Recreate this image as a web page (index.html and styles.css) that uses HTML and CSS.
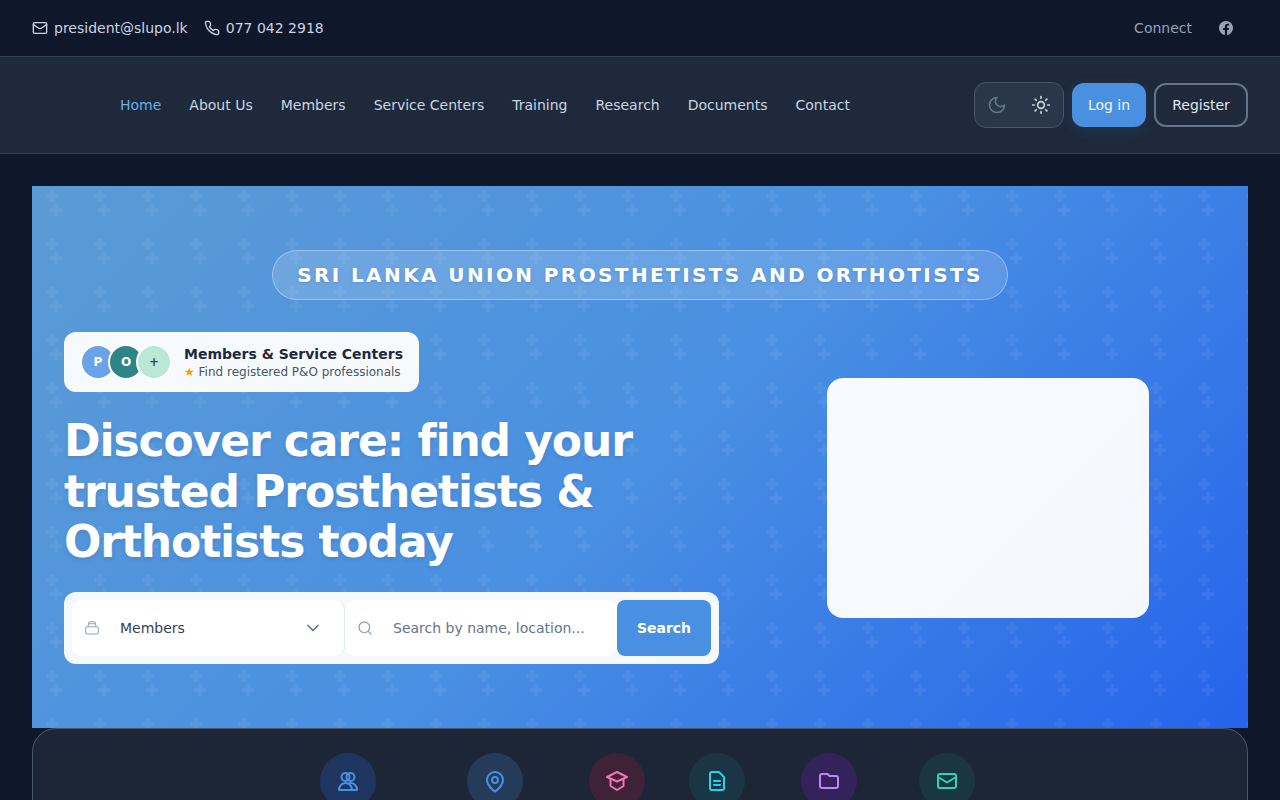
FILE: index.html
```html
<!DOCTYPE html>
<html lang="en">
<head>
<meta charset="utf-8">
<title>SLUPO</title>
<link rel="stylesheet" href="styles.css">
</head>
<body>
<div class="topbar">
  <div class="contact">
    <a class="contact-item"><svg class="i16" viewBox="0 0 24 24"><rect x="2" y="4" width="20" height="16" rx="2"/><path d="m22 7-8.97 5.7a1.94 1.94 0 0 1-2.06 0L2 7"/></svg>president@slupo.lk</a>
    <a class="contact-item"><svg class="i16" viewBox="0 0 24 24"><path d="M22 16.92v3a2 2 0 0 1-2.18 2 19.79 19.79 0 0 1-8.63-3.07 19.5 19.5 0 0 1-6-6 19.79 19.79 0 0 1-3.07-8.67A2 2 0 0 1 4.11 2h3a2 2 0 0 1 2 1.72c.13.96.36 1.9.7 2.81a2 2 0 0 1-.45 2.11L8.09 9.91a16 16 0 0 0 6 6l1.27-1.27a2 2 0 0 1 2.11-.45c.91.34 1.85.57 2.81.7A2 2 0 0 1 22 16.92z"/></svg>077 042 2918</a>
  </div>
  <div class="social">
    <span>Connect</span>
    <svg class="fb" viewBox="0 0 24 24"><path d="M24 12.07C24 5.4 18.63 0 12 0S0 5.4 0 12.07c0 6.03 4.39 11.02 10.13 11.93v-8.44H7.08v-3.49h3.05V9.41c0-3.02 1.79-4.69 4.53-4.69 1.31 0 2.69.24 2.69.24v2.96h-1.52c-1.49 0-1.96.93-1.96 1.89v2.26h3.33l-.53 3.49h-2.8V24C19.61 23.09 24 18.1 24 12.07z"/></svg>
  </div>
</div>

<nav class="navbar">
  <div class="nav-links">
    <a class="nav-link active">Home</a>
    <a class="nav-link">About Us</a>
    <a class="nav-link">Members</a>
    <a class="nav-link">Service Centers</a>
    <a class="nav-link">Training</a>
    <a class="nav-link">Research</a>
    <a class="nav-link">Documents</a>
    <a class="nav-link">Contact</a>
  </div>
  <div class="nav-actions">
    <div class="theme">
      <svg class="i20 moon" viewBox="0 0 24 24"><path d="M12 3a6 6 0 0 0 9 9 9 9 0 1 1-9-9Z"/></svg>
      <svg class="i20 sun" viewBox="0 0 24 24"><circle cx="12" cy="12" r="4"/><path d="M12 2v2M12 20v2M4.93 4.93l1.41 1.41M17.66 17.66l1.41 1.41M2 12h2M20 12h2M6.34 17.66l-1.41 1.41M19.07 4.93l-1.41 1.41"/></svg>
    </div>
    <a class="btn btn-login">Log in</a>
    <a class="btn btn-register">Register</a>
  </div>
</nav>

<main class="page">
  <section class="hero">
    <div class="pill-row"><h2 class="pill">SRI LANKA UNION PROSTHETISTS AND ORTHOTISTS</h2></div>
    <div class="hero-grid">
      <div class="hero-left">
        <div class="badge">
          <div class="avatars">
            <span class="avatar a1">P</span>
            <span class="avatar a2">O</span>
            <span class="avatar a3">+</span>
          </div>
          <div class="badge-text">
            <div class="badge-title">Members &amp; Service Centers</div>
            <div class="badge-sub"><span class="star">★</span> Find registered P&amp;O professionals</div>
          </div>
        </div>
        <h1 class="headline">Discover care: find your trusted Prosthetists &amp; Orthotists today</h1>
        <form class="search">
          <div class="field field-select">
            <svg class="i16 field-icon thin" viewBox="0 0 24 24"><rect x="2.500" y="10" width="19" height="11" rx="2.500"/><path d="M6 10l1-5.500a2 2 0 0 1 2-2h6a2 2 0 0 1 2 2l1 5.500M7 5.500h10"/></svg>
            <span class="select-value">Members</span>
            <svg class="i20 chevron" viewBox="0 0 24 24"><path d="m6 9 6 6 6-6"/></svg>
          </div>
          <div class="field field-input">
            <svg class="i16 field-icon" viewBox="0 0 24 24"><circle cx="11" cy="11" r="8"/><path d="m21 21-4.300-4.300"/></svg>
            <span class="placeholder">Search by name, location...</span>
          </div>
          <button class="search-btn" type="button">Search</button>
        </form>
      </div>
      <div class="hero-right">
        <div class="hero-card">
          <svg class="card-art" viewBox="0 0 322 240"><circle cx="45" cy="8" r="20"/><circle cx="90" cy="10" r="8"/><path d="M120 240l60-40 30 18 30-50 50-30 30-20v122z"/><circle cx="235" cy="200" r="20"/></svg>
        </div>
      </div>
    </div>
  </section>

  <section class="quick">
    <a class="quick-item w1"><span class="circle c-blue"><svg class="i24" viewBox="0 0 24 24"><circle cx="9.500" cy="8" r="4"/><circle cx="14.500" cy="8" r="4"/><path d="M3 21a6.500 7 0 0 1 13 0M13.500 14.200a6.500 6.500 0 0 1 7.500 6.800M3 21h18"/></svg></span></a>
    <a class="quick-item w2"><span class="circle c-slate"><svg class="i24" viewBox="0 0 24 24"><path d="M20 11c0 5-6 10.500-8 11.500-2-1-8-6.500-8-11.500a8 8 0 0 1 16 0z"/><circle cx="12" cy="11" r="3"/></svg></span></a>
    <a class="quick-item w3"><span class="circle c-pink"><svg class="i24" viewBox="0 0 24 24"><path d="M12 3l10 5-10 4.500L2 8z"/><path d="M5.500 10v7l6.500 4 6.500-4v-7"/></svg></span></a>
    <a class="quick-item w4"><span class="circle c-cyan"><svg class="i24" viewBox="0 0 24 24"><path d="M14 3H7a2 2 0 0 0-2 2v14a2 2 0 0 0 2 2h10a2 2 0 0 0 2-2V8z"/><path d="M9 12h6M9 16h6"/></svg></span></a>
    <a class="quick-item w5"><span class="circle c-purple"><svg class="i24" viewBox="0 0 24 24"><path d="M19 19a2 2 0 0 0 2-2V9a2 2 0 0 0-2-2h-6.500l-2-2H5a2 2 0 0 0-2 2v10a2 2 0 0 0 2 2z"/></svg></span></a>
    <a class="quick-item w6"><span class="circle c-teal"><svg class="i24" viewBox="0 0 24 24"><rect x="3" y="5" width="18" height="14" rx="2"/><path d="M3 8l9 5.500L21 8"/></svg></span></a>
  </section>
</main>
</body>
</html>
```
FILE: styles.css
```css
* { box-sizing: border-box; }
html, body { margin: 0; padding: 0; }
body {
  background: #0f172a;
  color: #e2e8f0;
  font-family: "DejaVu Sans", sans-serif;
  font-size: 14px;
}
svg { fill: none; stroke: currentColor; stroke-width: 2; stroke-linecap: round; stroke-linejoin: round; flex: none; display: block; }
.i16 { width: 16px; height: 16px; }
.i20 { width: 20px; height: 20px; }
.i24 { width: 24px; height: 24px; }

.topbar {
  height: 57px;
  display: flex;
  align-items: center;
  justify-content: space-between;
  padding: 0 32px;
  background: #0f172a;
  border-bottom: 1px solid #334155;
}
.contact { display: flex; gap: 16px; }
.contact-item { display: flex; align-items: center; gap: 6px; color: #cbd5e1; }
.social { display: flex; align-items: center; gap: 27px; padding-right: 15px; color: #94a3b8; }
.fb { width: 14px; height: 14px; fill: #94a3b8; stroke: none; }

.navbar {
  height: 97px;
  display: flex;
  align-items: center;
  justify-content: space-between;
  padding: 0 32px 0 120px;
  background: #1e293b;
  border-bottom: 1px solid #334155;
}
.nav-links { display: flex; gap: 28px; }
.nav-link { color: #cbd5e1; }
.nav-link.active { color: #63b3ed; }
.nav-actions { display: flex; align-items: center; gap: 8px; }
.theme {
  width: 90px;
  height: 46px;
  display: flex;
  align-items: center;
  justify-content: space-between;
  padding: 0 12px;
  background: #2a3649;
  border: 1px solid #475569;
  border-radius: 12px;
}
.moon { color: #64748b; }
.sun { color: #cbd5e1; }
.btn { height: 44px; display: flex; align-items: center; justify-content: center; border-radius: 12px; }
.btn-login { width: 74px; background: #4a90e2; color: #f1f5f9; box-shadow: 0 4px 14px rgba(74, 144, 226, .12); }
.btn-register { width: 94px; border: 2px solid #64748b; color: #e2e8f0; }

.page { padding: 32px 32px 0; }
.hero {
  padding: 64px 32px;
  background-color: #4a90e2;
  background-image:
    url("data:image/svg+xml,%3Csvg xmlns='http://www.w3.org/2000/svg' width='48' height='48'%3E%3Cpath fill='%23fff' fill-opacity='.06' d='M18 4h4v4h4v4h-4v4h-4v-4h-4V8h4zM22 18h4v4h4v4h-4v4h-4v-4h-4v-4h4z'/%3E%3C/svg%3E"),
    linear-gradient(135deg, #5b9bd5 0%, #4a90e2 50%, #2563eb 100%);
}
.pill-row { display: flex; justify-content: center; margin-bottom: 32px; }
.pill {
  margin: 0;
  height: 50px;
  width: 736px;
  display: flex;
  align-items: center;
  justify-content: center;
  background: rgba(255, 255, 255, .15);
  border: 1px solid rgba(255, 255, 255, .35);
  border-radius: 25px;
  color: #fff;
  font-size: 20px;
  font-weight: 700;
  letter-spacing: 2.4px;
  white-space: nowrap;
  text-shadow: 0 1px 3px rgba(0, 0, 0, .12);
}
.hero-grid { display: grid; grid-template-columns: 1fr 456px; gap: 32px; align-items: center; }
.badge {
  display: inline-flex;
  align-items: center;
  gap: 12px;
  height: 60px;
  padding: 0 16px;
  background: #f7fafc;
  border-radius: 12px;
  vertical-align: top;
}
.avatars { display: flex; }
.avatar {
  width: 36px;
  height: 36px;
  border: 2px solid #fff;
  border-radius: 50%;
  display: flex;
  align-items: center;
  justify-content: center;
  font-size: 12px;
  font-weight: 700;
  color: #fff;
}
.avatar + .avatar { margin-left: -8px; }
.a1 { background: #6ba3e8; }
.a2 { background: #2d8585; }
.a3 { background: #b9e8d6; color: #3d4852; }
.badge-title { font-size: 14px; font-weight: 700; color: #1e293b; line-height: 20px; }
.badge-sub { font-size: 12px; color: #475569; line-height: 16px; }
.star { color: #f59e0b; }
.headline {
  margin: 24px 0;
  max-width: 640px;
  color: #fff;
  font-size: 44px;
  font-weight: 700;
  line-height: 1.15;
  letter-spacing: -1.1px;
  text-shadow: 0 2px 4px rgba(0, 0, 0, .1);
}
.search {
  width: 655px;
  height: 72px;
  display: flex;
  padding: 8px;
  background: #f5f8fd;
  border-radius: 12px;
}
.field { display: flex; align-items: center; background: #fff; height: 56px; }
.field-icon { color: #94a3b8; }
.thin { stroke-width: 1.600; }
.field-select { width: 273px; padding: 0 21px 0 12px; border-radius: 10px; border-right: 1px solid #e2e8f0; }
.select-value { flex: 1; margin-left: 20px; color: #334155; }
.chevron { color: #64748b; }
.field-input { width: 272px; padding: 0 12px; border-radius: 10px; }
.placeholder { margin-left: 20px; color: #64748b; white-space: nowrap; }
.search-btn {
  width: 94px;
  height: 56px;
  border: 0;
  border-radius: 8px;
  background: #4a90e2;
  color: #fff;
  font: 700 14px "DejaVu Sans", sans-serif;
}
.hero-right { display: flex; justify-content: center; }
.hero-card {
  width: 322px;
  height: 240px;
  border-radius: 16px;
  overflow: hidden;
  background: linear-gradient(135deg, #f8fafe 0%, #f6f9fe 50%, #f3f6fd 100%);
}
.card-art { width: 322px; height: 240px; fill: #fff; fill-opacity: .12; stroke: none; }

.quick {
  height: 120px;
  display: flex;
  justify-content: center;
  gap: 48px;
  padding-top: 24px;
  background: #1c2637;
  border: 1px solid #475569;
  border-bottom: 0;
  border-radius: 24px 24px 0 0;
}
.quick-item { display: flex; justify-content: center; }
.w1 { width: 98px; }
.w2 { width: 100px; }
.w3 { width: 48px; }
.w4 { width: 56px; }
.w5 { width: 72px; }
.w6 { width: 68px; }
.circle { width: 56px; height: 56px; flex: none; border-radius: 50%; display: flex; align-items: center; justify-content: center; }
.c-blue { background: #1e3560; color: #4a90e2; }
.c-slate { background: #243b5a; color: #4a90e2; }
.c-pink { background: #3d2238; color: #f472b6; }
.c-cyan { background: #1a3644; color: #22d3ee; }
.c-purple { background: #33235a; color: #c084fc; }
.c-teal { background: #1a373f; color: #2dd4bf; }
```
